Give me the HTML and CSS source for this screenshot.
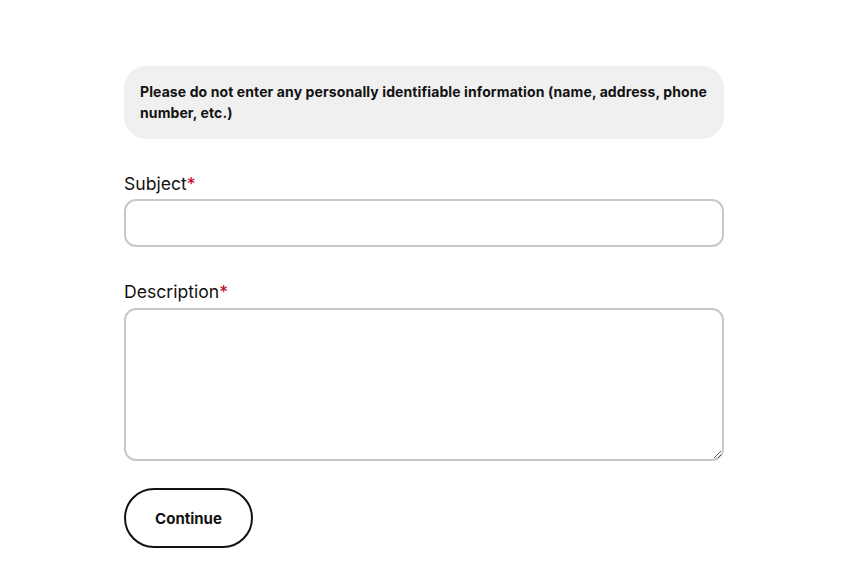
FILE: index.html
```html
<!DOCTYPE html>
<html lang="en">
<head>
<meta charset="utf-8">
<link rel="stylesheet" href="styles.css">
</head>
<body>
<main class="form">
  <div class="notice">Please do not enter any personally identifiable information (name, address, phone number, etc.)</div>
  <div class="field subject-field">
    <label class="label" for="subject">Subject<span class="req">*</span></label>
    <input class="input" id="subject" type="text">
  </div>
  <div class="field desc-field">
    <label class="label" for="desc">Description<span class="req">*</span></label>
    <textarea class="textarea" id="desc"></textarea>
  </div>
  <button class="btn" type="button">Continue</button>
</main>
</body>
</html>
```
FILE: styles.css
```css
* { box-sizing: border-box; }
html, body { margin: 0; padding: 0; background: #fff; }
body { font-family: Inter, "Noto Sans", sans-serif; color: #121212; }
.form {
  width: 600px;
  margin: 66px 0 0 124px;
  display: flex;
  flex-direction: column;
}
.notice {
  background: #f0f0f0;
  border-radius: 22px;
  padding: 15px 16px 16px;
  font-size: 14px;
  font-weight: 700;
  line-height: 21px;
  letter-spacing: 0.1px;
}
.field { display: flex; flex-direction: column; }
.subject-field { margin-top: 33px; }
.desc-field { margin-top: 33px; }
.label {
  font-size: 17.6px;
  line-height: 24px;
  letter-spacing: 0;
  margin-bottom: 3px;
}
.desc-field .label { margin-bottom: 4px; }
.req { color: #c5002e; }
.input, .textarea {
  width: 600px;
  border: 2px solid #c8c8c4;
  border-radius: 12px;
  background: #fff;
  font: inherit;
  outline: none;
}
.input { height: 48px; }
.textarea { height: 153px; resize: vertical; display: block; }
.btn {
  margin-top: 27px;
  width: 129px;
  height: 60px;
  border: 2px solid #121212;
  border-radius: 30px;
  background: #fff;
  font-family: inherit;
  font-size: 15px;
  font-weight: 700;
  color: #121212;
}
```
